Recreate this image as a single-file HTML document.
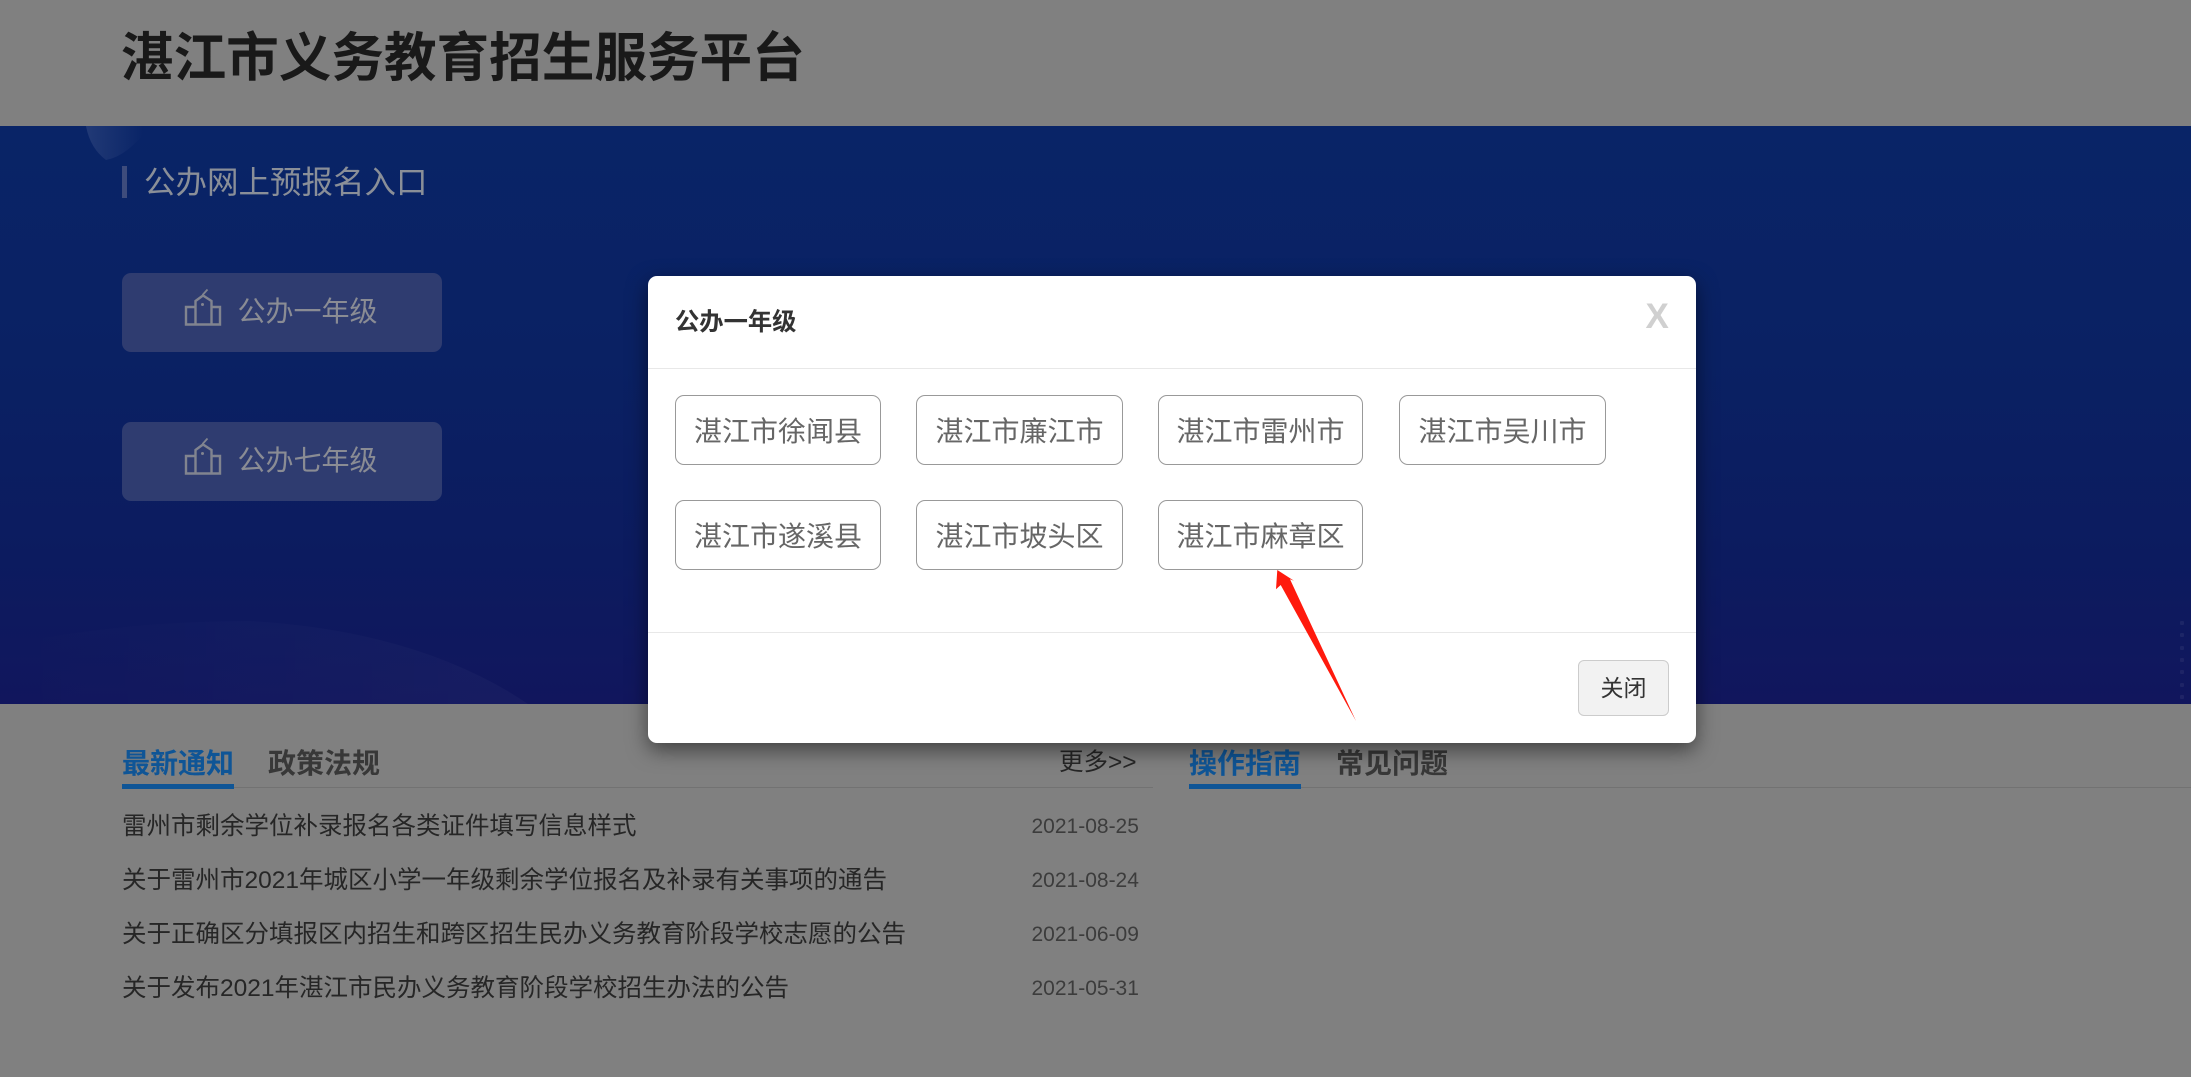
<!DOCTYPE html>
<html lang="zh-CN">
<head>
<meta charset="utf-8">
<title>湛江市义务教育招生服务平台</title>
<style>
html,body{margin:0;padding:0;background:#808080;width:2191px;height:1077px;overflow:hidden;}
body{position:relative;font-family:"Liberation Sans","Noto Sans CJK SC",sans-serif;}
.a{position:absolute;white-space:nowrap;}
svg{display:block;}
.hero{left:0;top:126px;width:2191px;height:578px;background:linear-gradient(180deg,#092467 0%,#0a2163 40%,#0c1b5f 75%,#11165d 100%);overflow:hidden;}
.entry{left:122px;width:320px;height:79px;border-radius:9px;background:#2f3c70;}
.etext{left:237.500px;font-size:28px;line-height:40px;color:#8a8c94;}
.mbtn{width:204px;height:68px;border:1px solid #999;border-radius:9px;background:#fff;color:#666;font-size:28px;line-height:72px;text-align:center;}
.tab{font-size:28px;line-height:40px;font-weight:700;color:#383838;}
.blue{color:#0f5596;}
.bar{height:5px;background:#0f5596;top:784px;}
.line{height:1px;background:#727272;top:787px;}
.li{left:122px;font-size:24.500px;line-height:36px;color:#262626;}
.dt{left:1031.500px;font-size:21px;line-height:30px;color:#3c3c3c;}
.dot{width:4px;height:4px;left:2180px;background:rgba(255,255,255,.06);border-radius:1px;}
</style>
</head>
<body>
<div class="a" style="left:121px;top:25px;font-size:52.600px;line-height:68px;font-weight:700;color:#191919;">湛江市义务教育招生服务平台</div>

<div class="a hero">
  <svg class="a" style="left:0;top:0" width="2191" height="578" viewBox="0 0 2191 578">
    <defs>
      <linearGradient id="g1" x1="0" x2="1" y1="0" y2="0"><stop offset="0" stop-color="#fff" stop-opacity=".1"/><stop offset=".9" stop-color="#fff" stop-opacity="0"/></linearGradient>
      <linearGradient id="g2" x1="0" x2="1" y1="0" y2="0"><stop offset="0" stop-color="#fff" stop-opacity="0"/><stop offset=".45" stop-color="#fff" stop-opacity=".012"/><stop offset="1" stop-color="#fff" stop-opacity=".028"/></linearGradient>
    </defs>
    <path d="M86 0 Q90 22 106 34 Q128 30 150 0Z" fill="url(#g1)"/>
    <path d="M0 578 V520 Q120 495 250 495 Q420 505 528 578Z" fill="url(#g2)"/>
  </svg>
</div>
<div class="a dot" style="top:621px"></div>
<div class="a dot" style="top:633px"></div>
<div class="a dot" style="top:646px"></div>
<div class="a dot" style="top:658px"></div>
<div class="a dot" style="top:670px"></div>
<div class="a dot" style="top:683px"></div>
<div class="a dot" style="top:695px"></div>

<div class="a" style="left:122px;top:166px;width:5px;height:32px;background:#3e4c7c;"></div>
<div class="a" style="left:144px;top:160px;font-size:31.500px;line-height:44px;color:#8a8f98;">公办网上预报名入口</div>

<div class="a entry" style="top:273px;"></div>
<svg class="a" style="left:184px;top:288px" width="38" height="40" viewBox="184 288 38 40" fill="none" stroke="#81848f" stroke-width="2.400">
  <path d="M195.500 307H186V324.500H220V307H211.500M195.500 324.500V301L203 295.500L211.500 301V324.500"/>
  <path d="M202.500 295L207.500 289.500" stroke-width="1.800"/>
  <circle cx="202.500" cy="304.500" r="1.500" fill="#81848f" stroke="none"/>
</svg>
<div class="a etext" style="top:292px;">公办一年级</div>

<div class="a entry" style="top:422px;"></div>
<svg class="a" style="left:184px;top:437px" width="38" height="40" viewBox="184 288 38 40" fill="none" stroke="#81848f" stroke-width="2.400">
  <path d="M195.500 307H186V324.500H220V307H211.500M195.500 324.500V301L203 295.500L211.500 301V324.500"/>
  <path d="M202.500 295L207.500 289.500" stroke-width="1.800"/>
  <circle cx="202.500" cy="304.500" r="1.500" fill="#81848f" stroke="none"/>
</svg>
<div class="a etext" style="top:441px;">公办七年级</div>

<div class="a tab blue" style="left:122px;top:743.500px;">最新通知</div>
<div class="a tab" style="left:268px;top:743.500px;">政策法规</div>
<div class="a" style="left:1059px;top:745px;font-size:24.500px;line-height:36px;color:#262626;">更多&gt;&gt;</div>
<div class="a line" style="left:122px;width:1031px;"></div>
<div class="a bar" style="left:122px;width:112px;"></div>

<div class="a tab blue" style="left:1189px;top:743.500px;">操作指南</div>
<div class="a tab" style="left:1336px;top:743.500px;">常见问题</div>
<div class="a line" style="left:1189px;width:1002px;"></div>
<div class="a bar" style="left:1189px;width:112px;"></div>

<div class="a li" style="top:809px;">雷州市剩余学位补录报名各类证件填写信息样式</div>
<div class="a dt" style="top:811.500px;">2021-08-25</div>
<div class="a li" style="top:863px;">关于雷州市2021年城区小学一年级剩余学位报名及补录有关事项的通告</div>
<div class="a dt" style="top:865.500px;">2021-08-24</div>
<div class="a li" style="top:917px;">关于正确区分填报区内招生和跨区招生民办义务教育阶段学校志愿的公告</div>
<div class="a dt" style="top:919.500px;">2021-06-09</div>
<div class="a li" style="top:971px;">关于发布2021年湛江市民办义务教育阶段学校招生办法的公告</div>
<div class="a dt" style="top:973.500px;">2021-05-31</div>

<div class="a" style="left:648px;top:276px;width:1048px;height:467px;background:#fff;border-radius:9px;box-shadow:0 7px 21px rgba(0,0,0,.5);"></div>
<div class="a" style="left:675px;top:305px;font-size:24.300px;line-height:36px;font-weight:700;color:#333;">公办一年级</div>
<div class="a" style="left:1645.500px;top:297px;font-size:35px;line-height:40px;font-weight:700;color:#d0d0d0;">X</div>
<div class="a" style="left:648px;top:368px;width:1048px;height:1px;background:#e8e8e8;"></div>
<div class="a" style="left:648px;top:632px;width:1048px;height:1px;background:#e8e8e8;"></div>

<div class="a mbtn" style="left:675px;top:395px;">湛江市徐闻县</div>
<div class="a mbtn" style="left:916px;top:395px;width:205px;">湛江市廉江市</div>
<div class="a mbtn" style="left:1158px;top:395px;width:203px;">湛江市雷州市</div>
<div class="a mbtn" style="left:1399px;top:395px;width:205px;">湛江市吴川市</div>
<div class="a mbtn" style="left:675px;top:500px;">湛江市遂溪县</div>
<div class="a mbtn" style="left:916px;top:500px;width:205px;">湛江市坡头区</div>
<div class="a mbtn" style="left:1158px;top:500px;width:203px;">湛江市麻章区</div>

<div class="a" style="left:1578px;top:660px;width:89px;height:54px;border:1px solid #ccc;border-radius:6px;background:#f2f2f2;color:#333;font-size:23px;line-height:54px;text-align:center;">关闭</div>

<svg class="a" style="left:0;top:0;" width="2191" height="1077" viewBox="0 0 2191 1077">
  <polygon points="1277.300,570 1294,580.700 1290,579.300 1356,721 1280.700,585 1276,589.300" fill="#ff1a0d"/>
</svg>
</body>
</html>
